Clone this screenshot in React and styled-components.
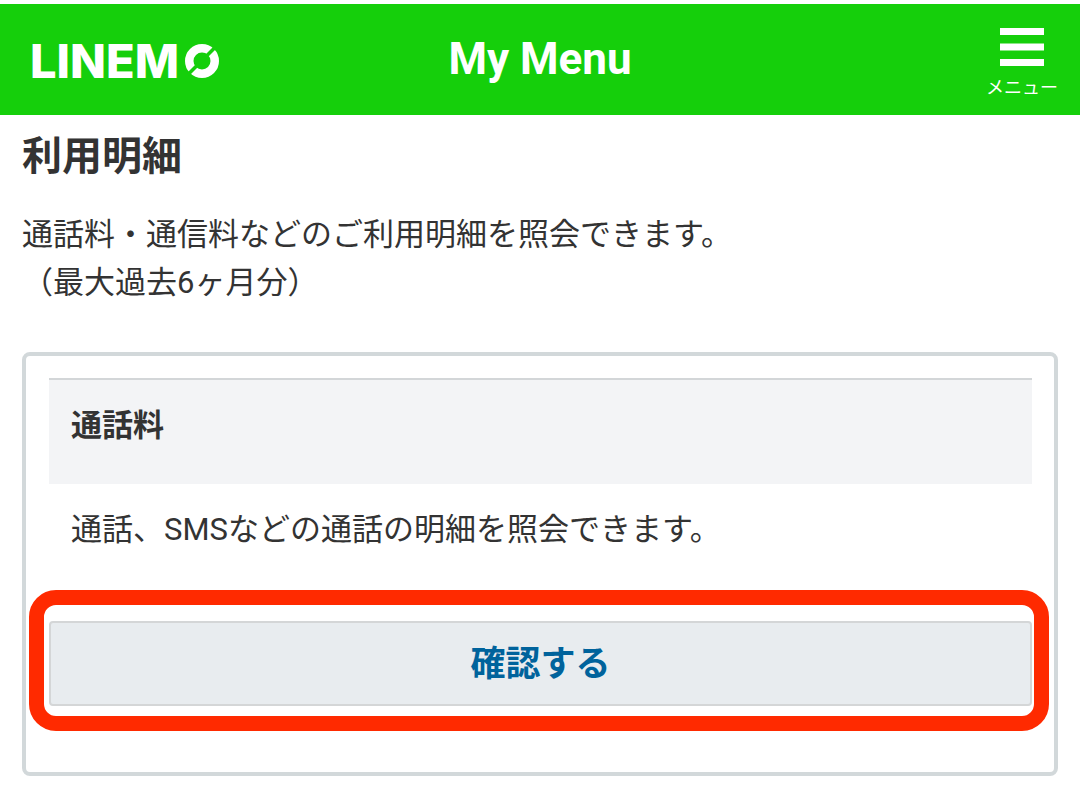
import React from "react";
import styled, { createGlobalStyle } from "styled-components";

const GlobalStyle = createGlobalStyle`
  *, *::before, *::after { box-sizing: border-box; }
  body {
    margin: 0;
    background: #fff;
    color: #333;
    font-family: Roboto, "Noto Sans CJK JP", sans-serif;
    font-size: 31px;
    line-height: 48px;
  }
  h1, h2, h3, p { margin: 0; }
`;

const Header = styled.header`
  display: grid;
  grid-template-columns: 1fr auto 1fr;
  align-items: center;
  margin-top: 4px;
  padding: 0 22px;
  height: 111px;
  background: #15cf0b;
  color: #fff;
`;

const Logo = styled.a`
  display: flex;
  align-items: center;
  gap: 6px;
  justify-self: start;
  padding: 2px 0 0 8px;
  color: inherit;
  font-family: Inter, sans-serif;
  font-size: 47px;
  font-weight: 800;
  text-decoration: none;
`;

const Title = styled.h1`
  padding-bottom: 2px;
  font-size: 44px;
  font-weight: 700;
`;

const MenuButton = styled.button`
  display: flex;
  flex-direction: column;
  align-items: center;
  gap: 9px;
  justify-self: end;
  padding: 9px 0 0;
  border: 0;
  background: none;
  color: inherit;
  font-family: inherit;
  font-size: 18px;
  line-height: 26px;
  cursor: pointer;
`;

const Main = styled.main`
  padding: 12px 22px 34px;
`;

const Heading = styled.h2`
  margin-bottom: 24px;
  font-size: 40px;
  line-height: 60px;
`;

const Lead = styled.p`
  margin-bottom: 45px;
`;

const Card = styled.section`
  padding: 22px 22px 66px 23px;
  border: 4px solid #d2d8da;
  border-radius: 8px;
`;

const CardTitle = styled.h3`
  padding: 22px 22px 34px;
  border-top: 2px solid #d3d6d8;
  background: #f3f4f6;
  font-size: 31px;
`;

const CardText = styled.p`
  padding: 22px 22px 67px;
`;

const Highlight = styled.div`
  position: relative;

  &::after {
    content: "";
    position: absolute;
    inset: -31px -17px -25px -20px;
    border: 15px solid #ff2a00;
    border-radius: 27px;
    pointer-events: none;
  }
`;

const ActionButton = styled.button`
  display: block;
  width: 100%;
  height: 85px;
  padding: 0 0 6px;
  border: 2px solid #d4d6d7;
  border-radius: 4px;
  background: #e8ecef;
  color: #00639c;
  font-family: inherit;
  font-size: 35px;
  font-weight: 700;
  cursor: pointer;
`;

function RingMark() {
  return (
    <svg width="34" height="34" viewBox="0 0 34 34" fill="none" aria-hidden="true">
      <circle cx="17" cy="17" r="12.75" stroke="#fff" strokeWidth="8.5" />
      <path d="M3 30.5 30.5 3" stroke="#15cf0b" strokeWidth="3.5" />
    </svg>
  );
}

function MenuIcon() {
  return (
    <svg width="44" height="38" viewBox="0 0 44 38" fill="#fff" aria-hidden="true">
      <path d="M0 0h44v7H0zM0 15.5h44v7H0zM0 31h44v7H0z" />
    </svg>
  );
}

export default function App() {
  return (
    <>
      <GlobalStyle />
      <Header>
        <Logo href="#top">
          <span>LINEM</span>
          <RingMark />
        </Logo>
        <Title>My Menu</Title>
        <MenuButton type="button">
          <MenuIcon />
          <span>メニュー</span>
        </MenuButton>
      </Header>
      <Main>
        <Heading>利用明細</Heading>
        <Lead>
          通話料・通信料などのご利用明細を照会できます。
          <br />
          （最大過去6ヶ月分）
        </Lead>
        <Card>
          <CardTitle>通話料</CardTitle>
          <CardText>通話、SMSなどの通話の明細を照会できます。</CardText>
          <Highlight>
            <ActionButton type="button">確認する</ActionButton>
          </Highlight>
        </Card>
      </Main>
    </>
  );
}
